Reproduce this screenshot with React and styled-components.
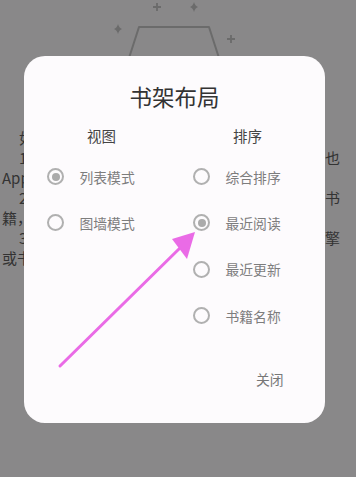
import React from "react";
import styled, { createGlobalStyle } from "styled-components";

const Global = createGlobalStyle`
  html, body { margin: 0; padding: 0; }
  body {
    width: 356px;
    height: 477px;
    overflow: hidden;
    background: #898889;
    font-family: "Noto Sans CJK SC", "Noto Sans", sans-serif;
  }
`;

const Screen = styled.div`
  position: relative;
  width: 356px;
  height: 477px;
  overflow: hidden;
  background: #898889;
`;

const Page = styled.div`
  display: flex;
  flex-direction: column;
`;

const Illustration = styled.svg`
  display: block;
  width: 356px;
  height: 128px;
`;

const Article = styled.div`
  display: flex;
  flex-direction: column;
  padding: 0 16px 0 2px;
  font-size: 15px;
  line-height: 20px;
  color: #333;
`;

const Line = styled.div`
  display: flex;
  justify-content: space-between;
  white-space: nowrap;
  height: 20px;
  padding-left: ${(p) => (p.$indent ? "17px" : "0")};
`;

const Dialog = styled.div`
  position: absolute;
  left: 24px;
  top: 56px;
  width: 301px;
  height: 367px;
  box-sizing: border-box;
  background: #fdfbfd;
  border-radius: 21px;
  padding: 25px 4.5px 0;
  display: flex;
  flex-direction: column;
`;

const Title = styled.div`
  text-align: center;
  font-size: 22.5px;
  line-height: 30px;
  color: #333;
`;

const Columns = styled.div`
  display: grid;
  grid-template-columns: 146px 146px;
  margin-top: 15px;
`;

const Column = styled.div`
  display: flex;
  flex-direction: column;
`;

const Heading = styled.div`
  text-align: center;
  font-size: 14.5px;
  line-height: 20px;
  color: #444;
  margin-bottom: 7.5px;
`;

const Option = styled.div`
  display: flex;
  align-items: center;
  height: 46.3px;
  padding-left: 18.5px;
  gap: 15.5px;
  font-size: 13.8px;
  color: #7d7d7d;
`;

const Radio = styled.span`
  box-sizing: border-box;
  width: 17px;
  height: 17px;
  border-radius: 50%;
  border: 2px solid #b0b0b0;
  display: flex;
  align-items: center;
  justify-content: center;
  flex: none;
  &::after {
    content: "";
    width: 8px;
    height: 8px;
    border-radius: 50%;
    background: ${(p) => (p.$checked ? "#ababab" : "transparent")};
  }
`;

const Footer = styled.div`
  display: flex;
  justify-content: flex-end;
  margin-top: 30.5px;
  padding-right: 37px;
`;

const CloseButton = styled.div`
  font-size: 13.8px;
  line-height: 20px;
  color: #777;
`;

const Overlay = styled.svg`
  position: absolute;
  left: 0;
  top: 0;
  width: 356px;
  height: 477px;
  pointer-events: none;
`;

const RadioOption = ({ checked, label }) => (
  <Option>
    <Radio $checked={checked} />
    <span>{label}</span>
  </Option>
);

const Plus = ({ x, y }) => (
  <path d={`M${x - 4} ${y}H${x + 4}M${x} ${y - 4}V${y + 4}`} stroke="#6b6b6b" strokeWidth="1.8" />
);

const Star = ({ x, y }) => (
  <path
    d={`M${x} ${y - 5}Q${x + 1} ${y - 1} ${x + 4} ${y}Q${x + 1} ${y + 1} ${x} ${y + 5}Q${x - 1} ${y + 1} ${x - 4} ${y}Q${x - 1} ${y - 1} ${x} ${y - 5}Z`}
    fill="#6b6b6b"
  />
);

export default function App() {
  return (
    <Screen>
      <Global />
      <Page>
        <Illustration viewBox="0 0 356 128">
          <path d="M129 58L139 27H209L219 58" fill="none" stroke="#6b6b6b" strokeWidth="2" strokeLinejoin="round" />
          <Plus x={157} y={7} />
          <Star x={194} y={7} />
          <Star x={118} y={29} />
          <Plus x={231} y={39} />
        </Illustration>
        <Article>
          <Line $indent><span>如</span><span></span></Line>
          <Line $indent><span>1</span><span>也</span></Line>
          <Line><span>App</span><span></span></Line>
          <Line $indent><span>2</span><span>书</span></Line>
          <Line><span>籍，</span><span></span></Line>
          <Line $indent><span>3</span><span>擎</span></Line>
          <Line><span>或书</span><span></span></Line>
        </Article>
      </Page>
      <Dialog>
        <Title>书架布局</Title>
        <Columns>
          <Column>
            <Heading>视图</Heading>
            <RadioOption checked label="列表模式" />
            <RadioOption label="图墙模式" />
          </Column>
          <Column>
            <Heading>排序</Heading>
            <RadioOption label="综合排序" />
            <RadioOption checked label="最近阅读" />
            <RadioOption label="最近更新" />
            <RadioOption label="书籍名称" />
          </Column>
        </Columns>
        <Footer>
          <CloseButton>关闭</CloseButton>
        </Footer>
      </Dialog>
      <Overlay viewBox="0 0 356 477">
        <line x1="60" y1="366" x2="181" y2="247" stroke="#ea6be6" strokeWidth="3" strokeLinecap="round" />
        <polygon points="195,232 172,239 187,259" fill="#ea6be6" />
      </Overlay>
    </Screen>
  );
}
